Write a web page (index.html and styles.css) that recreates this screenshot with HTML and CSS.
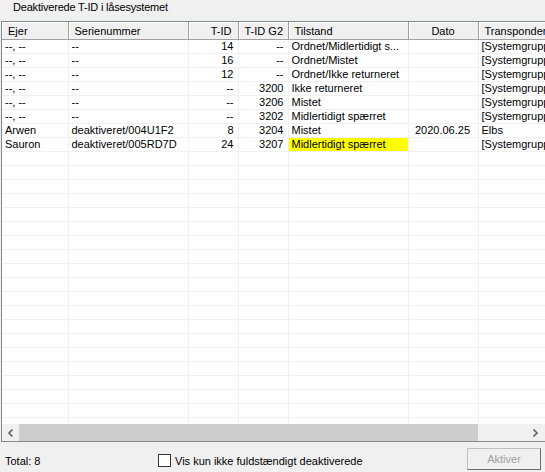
FILE: index.html
```html
<!DOCTYPE html>
<html>
<head>
<meta charset="utf-8">
<link rel="stylesheet" href="styles.css">
</head>
<body>
<div class="title">Deaktiverede T-ID i låsesystemet</div>
<div class="list">
  <div class="viewport">
    <table class="grid">
      <colgroup>
        <col class="c1"><col class="c2"><col class="c3"><col class="c4"><col class="c5"><col class="c6"><col class="c7">
      </colgroup>
      <thead>
        <tr>
          <th>Ejer</th><th>Serienummer</th><th class="r">T-ID</th><th class="r">T-ID G2</th><th>Tilstand</th><th class="c">Dato</th><th>Transponder</th>
        </tr>
      </thead>
      <tbody>
        <tr><td>--, --</td><td>--</td><td class="r">14</td><td class="r">--</td><td>Ordnet/Midlertidigt s...</td><td class="c"></td><td>[Systemgruppe]</td></tr>
        <tr><td>--, --</td><td>--</td><td class="r">16</td><td class="r">--</td><td>Ordnet/Mistet</td><td class="c"></td><td>[Systemgruppe]</td></tr>
        <tr><td>--, --</td><td>--</td><td class="r">12</td><td class="r">--</td><td>Ordnet/Ikke returneret</td><td class="c"></td><td>[Systemgruppe]</td></tr>
        <tr><td>--, --</td><td>--</td><td class="r">--</td><td class="r">3200</td><td>Ikke returneret</td><td class="c"></td><td>[Systemgruppe]</td></tr>
        <tr><td>--, --</td><td>--</td><td class="r">--</td><td class="r">3206</td><td>Mistet</td><td class="c"></td><td>[Systemgruppe]</td></tr>
        <tr><td>--, --</td><td>--</td><td class="r">--</td><td class="r">3202</td><td>Midlertidigt spærret</td><td class="c"></td><td>[Systemgruppe]</td></tr>
        <tr><td>Arwen</td><td>deaktiveret/004U1F2</td><td class="r">8</td><td class="r">3204</td><td>Mistet</td><td class="c">2020.06.25</td><td>Elbs</td></tr>
        <tr><td>Sauron</td><td>deaktiveret/005RD7D</td><td class="r">24</td><td class="r">3207</td><td class="hl">Midlertidigt spærret</td><td class="c"></td><td>[Systemgruppe]</td></tr>
        <tr class="e"><td></td><td></td><td></td><td></td><td></td><td></td><td></td></tr>
        <tr class="e"><td></td><td></td><td></td><td></td><td></td><td></td><td></td></tr>
        <tr class="e"><td></td><td></td><td></td><td></td><td></td><td></td><td></td></tr>
        <tr class="e"><td></td><td></td><td></td><td></td><td></td><td></td><td></td></tr>
        <tr class="e"><td></td><td></td><td></td><td></td><td></td><td></td><td></td></tr>
        <tr class="e"><td></td><td></td><td></td><td></td><td></td><td></td><td></td></tr>
        <tr class="e"><td></td><td></td><td></td><td></td><td></td><td></td><td></td></tr>
        <tr class="e"><td></td><td></td><td></td><td></td><td></td><td></td><td></td></tr>
        <tr class="e"><td></td><td></td><td></td><td></td><td></td><td></td><td></td></tr>
        <tr class="e"><td></td><td></td><td></td><td></td><td></td><td></td><td></td></tr>
        <tr class="e"><td></td><td></td><td></td><td></td><td></td><td></td><td></td></tr>
        <tr class="e"><td></td><td></td><td></td><td></td><td></td><td></td><td></td></tr>
        <tr class="e"><td></td><td></td><td></td><td></td><td></td><td></td><td></td></tr>
        <tr class="e"><td></td><td></td><td></td><td></td><td></td><td></td><td></td></tr>
        <tr class="e"><td></td><td></td><td></td><td></td><td></td><td></td><td></td></tr>
        <tr class="e"><td></td><td></td><td></td><td></td><td></td><td></td><td></td></tr>
        <tr class="e"><td></td><td></td><td></td><td></td><td></td><td></td><td></td></tr>
        <tr class="e"><td></td><td></td><td></td><td></td><td></td><td></td><td></td></tr>
        <tr class="e"><td></td><td></td><td></td><td></td><td></td><td></td><td></td></tr>
        <tr class="e"><td></td><td></td><td></td><td></td><td></td><td></td><td></td></tr>
        <tr class="e"><td></td><td></td><td></td><td></td><td></td><td></td><td></td></tr>
        <tr class="e"><td></td><td></td><td></td><td></td><td></td><td></td><td></td></tr>
      </tbody>
    </table>
  </div>
  <div class="hscroll">
    <div class="arrow">
      <svg width="8" height="8" viewBox="0 0 8 8"><path d="M5.5 0.5 L2 4 L5.5 7.5" fill="none" stroke="#606060" stroke-width="1.6"/></svg>
    </div>
    <div class="thumb"></div>
    <div class="track"></div>
    <div class="arrow">
      <svg width="8" height="8" viewBox="0 0 8 8"><path d="M2.5 0.5 L6 4 L2.5 7.5" fill="none" stroke="#606060" stroke-width="1.6"/></svg>
    </div>
  </div>
</div>
<div class="footer">
  <div class="total">Total: 8</div>
  <label class="check"><span class="box"></span><span>Vis kun ikke fuldstændigt deaktiverede</span></label>
  <div class="btn">Aktiver</div>
</div>
</body>
</html>
```
FILE: styles.css
```css
html, body {
  margin: 0;
  padding: 0;
}
body {
  width: 545px;
  height: 472px;
  overflow: hidden;
  background: #f0f0f0;
  font-family: "Liberation Sans", Arial, sans-serif;
  font-size: 11px;
  color: #000;
}
.title {
  height: 21px;
  line-height: 14px;
  padding-left: 13px;
  box-sizing: border-box;
  letter-spacing: -0.2px;
}
.list {
  margin-left: 1px;
  width: 560px;
  height: 421px;
  border: 1px solid #828790;
  border-right: none;
  box-sizing: border-box;
  background: #fff;
  display: flex;
  flex-direction: column;
  overflow: hidden;
}
.viewport {
  flex: 1;
  overflow: hidden;
}
.grid {
  border-collapse: collapse;
  table-layout: fixed;
  width: 619px;
}
.c1 { width: 66px; }
.c2 { width: 120px; }
.c3 { width: 50px; }
.c4 { width: 50px; }
.c5 { width: 120px; }
.c6 { width: 70px; }
.c7 { width: 143px; }
.grid th {
  height: 17px;
  padding: 0 6px;
  font-weight: normal;
  text-align: left;
  background: #f0f0f0;
  border-right: 1px solid #a0a0a0;
  border-bottom: 1px solid #a0a0a0;
  box-shadow: inset 1px 1px 0 #fff;
  white-space: nowrap;
  overflow: hidden;
  line-height: 16px;
}
.grid td {
  height: 13px;
  padding: 0 4px 0 3px;
  border-right: 1px solid #f0f0f0;
  border-bottom: 1px solid #f0f0f0;
  white-space: nowrap;
  overflow: hidden;
  line-height: 13px;
}
.grid tbody tr:first-child td {
  border-top: 1px solid #fff;
}
.grid th.r, .grid td.r { text-align: right; }
.grid th.c, .grid td.c { text-align: center; }
.grid td.hl { background: #ffff00; }
.hscroll {
  height: 17px;
  display: flex;
  background: #f0f0f0;
  flex: none;
}
.arrow {
  width: 17px;
  height: 17px;
  display: flex;
  align-items: center;
  justify-content: center;
  flex: none;
}
.thumb {
  width: 459px;
  height: 17px;
  background: #cdcdcd;
  flex: none;
}
.track {
  width: 48px;
  flex: none;
}
.footer {
  display: flex;
  align-items: flex-start;
  height: 31px;
  padding-left: 5px;
}
.total {
  width: 153px;
  padding-top: 13px;
}
.check {
  display: flex;
  align-items: center;
  gap: 4px;
  padding-top: 12px;
  width: 309px;
}
.box {
  width: 11px;
  height: 11px;
  border: 1px solid #333;
  background: #fff;
  flex: none;
}
.btn {
  width: 74px;
  height: 22px;
  box-sizing: border-box;
  border: 1px solid #bfbfbf;
  border-right-color: #6d6d6d;
  border-bottom-color: #6d6d6d;
  background: #f0f0f0;
  color: #a0a0a0;
  display: flex;
  align-items: center;
  justify-content: center;
  margin-top: 6px;
}
```
